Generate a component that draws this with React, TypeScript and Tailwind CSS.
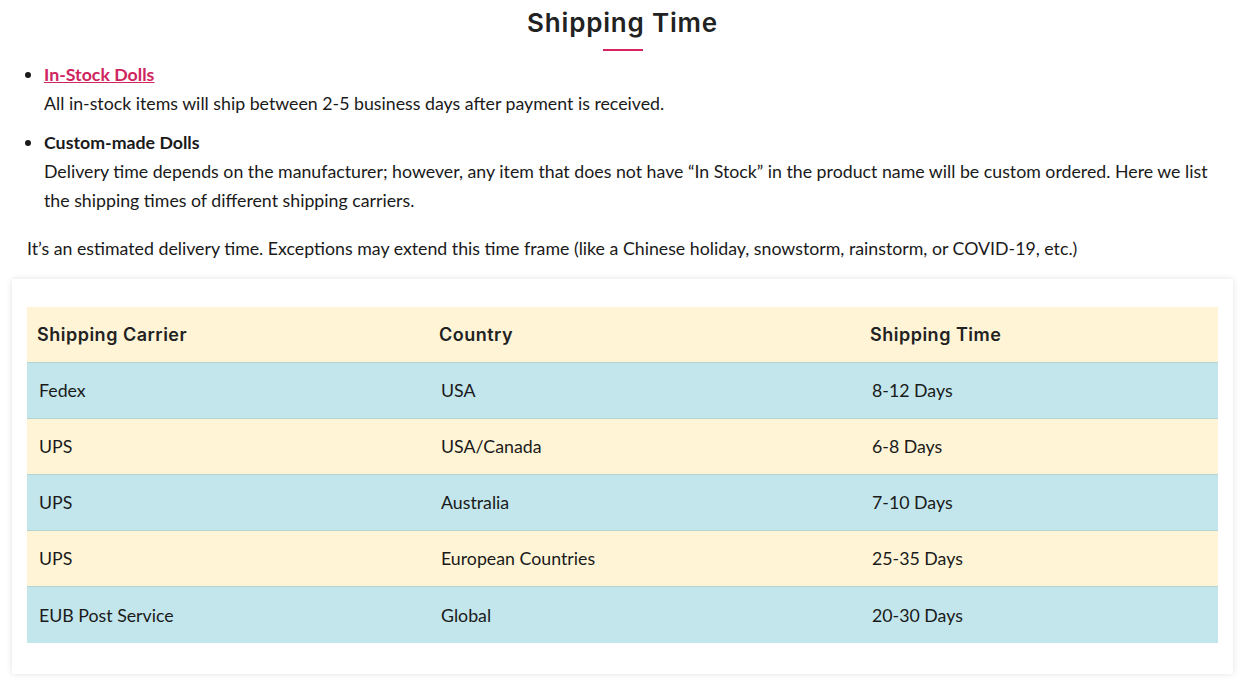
import React from "react";

const rows = [
  ["Fedex", "USA", "8-12 Days"],
  ["UPS", "USA/Canada", "6-8 Days"],
  ["UPS", "Australia", "7-10 Days"],
  ["UPS", "European Countries", "25-35 Days"],
  ["EUB Post Service", "Global", "20-30 Days"],
];

export default function App() {
  return (
    <div className="w-[1245px] h-[693px] bg-white text-[#1a1a1a] font-['Lato',sans-serif] overflow-hidden">
      <div className="flex flex-col items-center pt-[4px]">
        <h1 className="font-['Inter',sans-serif] font-semibold text-[26px] leading-[37px] text-[#222] tracking-[0.8px]">
          Shipping Time
        </h1>
        <div className="w-[40px] h-[2px] bg-[#d6245f] mt-[8px]" />
      </div>
      <ul className="list-disc pl-[44px] pr-[20px] mt-[9px] text-[17.75px] leading-[29px]">
        <li>
          <a href="#" className="font-bold text-[#d0245e] underline">
            In-Stock Dolls
          </a>
          <div>All in-stock items will ship between 2-5 business days after payment is received.</div>
        </li>
        <li className="mt-[10px]">
          <span className="font-bold">Custom-made Dolls</span>
          <div>
            Delivery time depends on the manufacturer; however, any item that does not have “In Stock” in the product
            name will be custom ordered. Here we list the shipping times of different shipping carriers.
          </div>
        </li>
      </ul>
      <p className="pl-[27px] mt-[19px] text-[17.75px] leading-[29px]">
        It’s an estimated delivery time. Exceptions may extend this time frame (like a Chinese holiday, snowstorm,
        rainstorm, or COVID-19, etc.)
      </p>
      <div className="mx-[12px] mt-[16px] w-[1221px] bg-white shadow-[0_0_6px_rgba(0,0,0,0.12)] px-[15px] pt-[28px] pb-[31px]">
        <table className="w-full border-collapse text-[17.75px]">
          <colgroup>
            <col className="w-[402px]" />
            <col className="w-[431px]" />
            <col />
          </colgroup>
          <thead>
            <tr className="bg-[#fff5d6] h-[55px]">
              {["Shipping Carrier", "Country", "Shipping Time"].map((h) => (
                <th
                  key={h}
                  className="text-left font-['Inter',sans-serif] font-semibold text-[18px] tracking-[0.5px] text-[#222] px-[10px]"
                >
                  {h}
                </th>
              ))}
            </tr>
          </thead>
          <tbody>
            {rows.map((r, i) => (
              <tr
                key={i}
                className={`h-[56.2px] border-t border-[#b3d3d3] ${i % 2 === 0 ? "bg-[#c2e6ec]" : "bg-[#fff5d6]"}`}
              >
                {r.map((c, j) => (
                  <td key={j} className="px-[12px]">
                    {c}
                  </td>
                ))}
              </tr>
            ))}
          </tbody>
        </table>
      </div>
    </div>
  );
}
